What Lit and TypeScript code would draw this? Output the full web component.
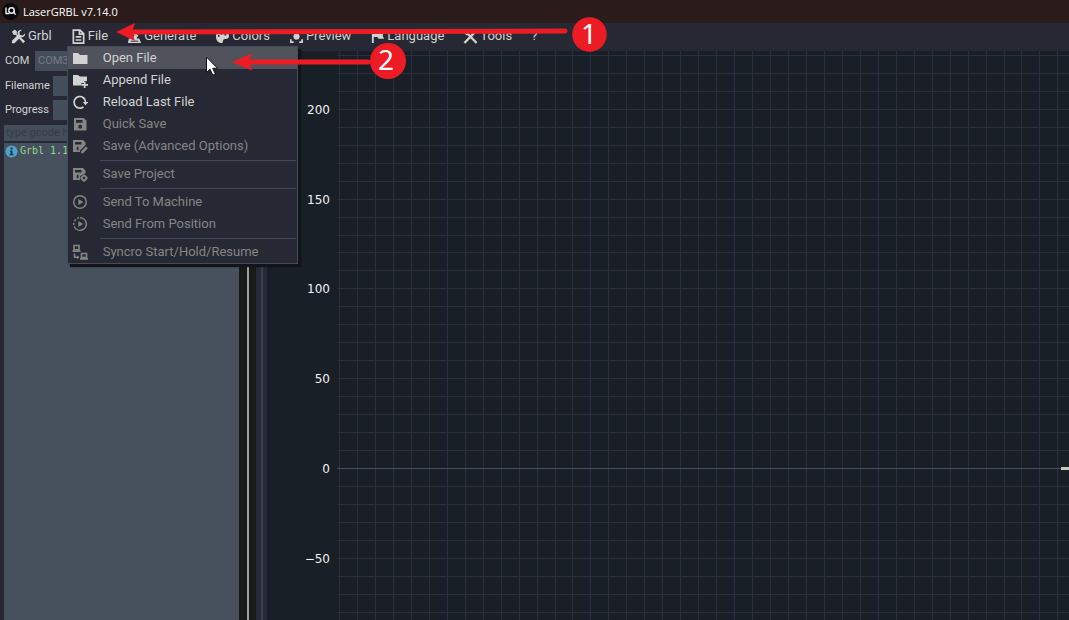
import { LitElement, html, svg, css, nothing, TemplateResult, SVGTemplateResult } from "lit";
import { customElement, state } from "lit/decorators.js";

const icons: Record<string, SVGTemplateResult> = {
  grbl: svg`<path d="M1 3 4 .5 6.500 3 6 5l9 8-2 2.200L5 6.200 3 6.500z"/><path d="M15 4.500 12.800 7 9.500 6.500 9 3.200 11.500 1C9.500.5 7 2 7 4.500L7.500 6 1 12.500v2.700h2.800L10 8.800C12.500 9.500 15.500 7.500 15 4.500z"/>`,
  file: svg`<path fill="none" stroke="currentColor" stroke-width="1.800" d="M2.500 1.200h7L13.500 5v10h-11zM9 1.500V5.500h4"/><path d="M5 7.500h6v1.700H5zM5 10.800h6v1.700H5z"/>`,
  generate: svg`<path d="M2 10h3l3-3-3-3 2-2 5 5-2 3h3l2 5H1z"/><path fill="#262933" d="M4 12.500h8v1H4z"/>`,
  colors: svg`<path fill-rule="evenodd" d="M8 1C4 1 1 4 1 8s2.500 7 6 7c2 0 1-2.500 2-3.500 1.200-1.500 6 0 6-4 0-4-3-6.500-7-6.500zM4 6.500a1 1 0 1 1 0 2 1 1 0 0 1 0-2zM7 4a1 1 0 1 1 0 2 1 1 0 0 1 0-2zM11 5a1 1 0 1 1 0 2 1 1 0 0 1 0-2z"/>`,
  preview: svg`<path fill="none" stroke="currentColor" stroke-width="1.800" d="M2 5V2h3M11 2h3v3M14 11v3h-3M5 14H2v-3"/><circle cx="8" cy="8" r="3.300"/>`,
  language: svg`<path d="M2 2h8l1 1.500h4L13.500 7l1.500 3.500H9L8 8.500H4V15H2z"/>`,
  tools: svg`<path fill="none" stroke="currentColor" stroke-width="2.400" d="M1.500 15 14 2M4 4l10.500 11"/><path d="M1 1h4l2 3-3 3-3-3z"/>`,
  open: svg`<path d="M1 3h5l2 2h7.500v9H1z"/>`,
  append: svg`<path d="M1 3h5l2 1.500h7V9h-3v2H9.500v2.500H1z"/><path d="M11.800 9.500h1.700V12H16v1.700h-2.500V16h-1.700v-2.300H9.500V12h2.300z"/>`,
  reload: svg`<path fill="none" stroke="currentColor" stroke-width="1.700" d="M11.500 12.800A5.800 5.800 0 1 1 13.600 8.300"/><path d="M10.800 8H16.200l-2.700 3.300z"/>`,
  save: svg`<path fill-rule="evenodd" d="M2 2h9.500L14.500 4.500V14.500H2zM4 4v2.700h6.500V4zM8.200 8.800a2 2 0 1 0 0 4 2 2 0 0 0 0-4z"/>`,
  saveAs: svg`<path fill-rule="evenodd" d="M1 2h10l2.500 2.500V7L8 12.500V14H1zM3 4v2.500h6.500V4zM6.500 8.500a2 2 0 1 0 0 4z"/><path d="m9 13.500 5-5L15.800 10.300 11 15.200H9z"/>`,
  project: svg`<path fill-rule="evenodd" d="M1 2h10l2.500 2.500V7L8 10v4H1zM3 4v2.500h6.500V4zM6.500 8.500a2 2 0 1 0 0 4z"/><circle cx="12" cy="12" r="2.200" fill="none" stroke="currentColor" stroke-width="1.800"/><path d="M11.200 8.300h1.600v1.500h-1.600zM11.200 14.200h1.600v1.500h-1.600zM8.300 11.200h1.500v1.600H8.300zM14.200 11.200h1.500v1.600h-1.500z"/>`,
  send: svg`<circle cx="8" cy="8" r="6.300" fill="none" stroke="currentColor" stroke-width="1.500"/><path d="m6.300 5 5 3-5 3z"/>`,
  sendFrom: svg`<path fill="none" stroke="currentColor" stroke-width="1.500" d="M8 1.700a6.300 6.300 0 1 1-5.800 8.800"/><path fill="none" stroke="currentColor" stroke-width="1.500" stroke-dasharray="2 1.800" d="M1.800 8.800A6.300 6.300 0 0 1 7 1.800"/><path d="m6.300 5 5 3-5 3z"/>`,
  syncro: svg`<path fill="none" stroke="currentColor" stroke-width="1.600" d="M2 1.500h5v4.200H2zM9.500 9.500h5v4h-5zM2.500 9.500v3.800h3.500"/><path d="M.5 6.300h8V8h-8zM8 14h8v1.700H8zM5 11.300l2.500 2-2.500 2z"/>`,
};

const icon = (name: string): TemplateResult =>
  html`<svg class="icon" viewBox="0 0 16 16" fill="currentColor" aria-hidden="true">${icons[name]}</svg>`;

interface MenuEntry { icon: string; label: string; disabled?: boolean; divider?: boolean; }

const FILE_MENU: MenuEntry[] = [
  { icon: "open", label: "Open File" },
  { icon: "append", label: "Append File" },
  { icon: "reload", label: "Reload Last File" },
  { icon: "save", label: "Quick Save", disabled: true },
  { icon: "saveAs", label: "Save (Advanced Options)", disabled: true },
  { icon: "project", label: "Save Project", disabled: true, divider: true },
  { icon: "send", label: "Send To Machine", disabled: true, divider: true },
  { icon: "sendFrom", label: "Send From Position", disabled: true },
  { icon: "syncro", label: "Syncro Start/Hold/Resume", disabled: true, divider: true },
];

const MENU_BAR = ["Grbl", "File", "Generate", "Colors", "Preview", "Language", "Tools"];

@customElement("laser-plot")
export class LaserPlot extends LitElement {
  static styles = css`
    :host { display: block; min-width: 0; background: #191f26; overflow: hidden; }
    .plot { display: block; width: 100%; height: 100%; }
    .line { stroke: #2a2e40; stroke-width: 1; shape-rendering: crispEdges; }
    .zero { stroke: #484c66; }
    .tick { fill: #f2f2f2; font: 12px "DejaVu Sans", sans-serif; text-anchor: end; }
  `;

  render() {
    const pitch = 17.96;
    const zeroY = 417;
    const columns = Array.from({ length: 160 }, (_, i) => Math.round(72 + i * pitch) + 0.5);
    const rows = Array.from({ length: 90 }, (_, i) => 23 - i).filter((n) => n !== 0);
    const y = (n: number) => Math.round(zeroY - n * pitch) + 0.5;
    return html`<svg class="plot" role="img" aria-label="Preview grid">
      ${columns.map((x) => svg`<line class="line" x1=${x} x2=${x} y1="0" y2="100%"></line>`)}
      ${rows.map((n) => svg`<line class="line" x1="70" x2="100%" y1=${y(n)} y2=${y(n)}></line>`)}
      <line class="line zero" x1="70" x2="100%" y1=${y(0)} y2=${y(0)}></line>
      <rect x="794" y="416" width="100%" height="3" fill="#c3cbbc"></rect>
      ${[200, 150, 100, 50, 0, -50].map(
        (v) => svg`<text class="tick" x="63" y=${Math.ceil(y(v / 10) + 4)}>${v < 0 ? `\u2212${-v}` : v}</text>`,
      )}
    </svg>`;
  }
}

@customElement("app-root")
export class AppRoot extends LitElement {
  @state() private menuOpen = true;

  static styles = css`
    :host {
      display: flex; flex-direction: column; position: relative; height: 100vh; overflow: hidden;
      background: #262933; color: #d2d2d2; font: 13px/18px Roboto, sans-serif;
    }
    * { box-sizing: border-box; }
    button, input, select { font: inherit; color: inherit; border: 0; border-radius: 0; margin: 0; padding: 0; background: none; }
    .titlebar { display: flex; align-items: center; gap: 4px; flex: none; height: 23px; padding-left: 2px; background: #2b1b1a; }
    .logo { width: 17px; height: 17px; }
    .title { margin: 0; font: 11px/16px "Open Sans", sans-serif; color: #fff; }
    .menubar { display: flex; flex: none; gap: 19px; height: 28px; padding: 4px 0 6px 11px; }
    .anchor { position: relative; display: flex; }
    .top { display: flex; align-items: center; gap: 2px; white-space: nowrap; }
    .top .icon { width: 15px; height: 15px; }
    .icon { flex: none; width: 16px; height: 16px; }
    .menu {
      position: absolute; z-index: 2; top: 19px; left: -4px; width: 231px;
      background: #262933; border: 1px solid #484a5a; box-shadow: 3px 3px 1px #11151a;
    }
    .item { display: flex; align-items: center; gap: 15px; width: 100%; height: 22px; padding-left: 4px; text-align: left; white-space: nowrap; }
    .item:disabled { color: #858585; }
    .item.active { background: #50535c; }
    .rule { height: 1px; margin: 3px 1px 2px 32px; border: 0; background: #43475a; }
    .body { display: grid; grid-template-columns: 239px 17px 11px minmax(0, 1fr); flex: 1; min-height: 0; }
    .panel { display: flex; flex-direction: column; min-width: 0; padding-left: 4px; font: 11px/16px Roboto, sans-serif; }
    .row { display: grid; grid-template-columns: 48px minmax(0, 1fr); align-items: center; height: 24px; padding-left: 1px; }
    .com { grid-template-columns: 30px minmax(0, 1fr); height: 20px; margin-bottom: 3px; }
    .field { width: 100%; min-width: 0; height: 20px; padding: 0 3px; background: #444e5a; color: #777b80; appearance: none; opacity: 1; }
    .gcode { flex: none; width: 100%; height: 16px; margin: 3px 0 2px; padding: 0 2px; background: #444e5a; }
    .gcode::placeholder { color: #343b46; opacity: 1; }
    .log { flex: 1; margin: 0; padding: 0; list-style: none; background: #47515d; color: #93d68c; font: 10px/16px "DejaVu Sans Mono", monospace; }
    .entry { display: flex; align-items: center; gap: 2px; padding-left: 1px; }
    .info { width: 13px; height: 13px; }
    .gutter { background: linear-gradient(#a0a0a0, #a0a0a0) 8px 0 / 2px 100% no-repeat #181a19; }
    .splitter { background: linear-gradient(#3c3e50, #3c3e50) 5px 0 / 2px 100% no-repeat #262a37; }
    .notes { position: absolute; z-index: 3; left: 0; top: 0; width: 610px; height: 90px; pointer-events: none; }
    .digit { font: 28px "Noto Sans", sans-serif; fill: #fff; text-anchor: middle; }
  `;

  private renderMenu() {
    return html`<div class="menu" role="menu" aria-label="File">
      ${FILE_MENU.map((entry, index) => html`
        ${entry.divider ? html`<hr class="rule" />` : nothing}
        <button class="item ${index === 0 ? "active" : ""}" role="menuitem" ?disabled=${entry.disabled}>
          ${icon(entry.icon)}<span>${entry.label}</span>
        </button>`)}
    </div>`;
  }

  render() {
    return html`
      <header class="titlebar">
        <svg class="logo" viewBox="0 0 17 17" aria-hidden="true">
          <circle cx="8.500" cy="8.500" r="8.500" fill="#090b0d" />
          <g fill="none" stroke="#eee" stroke-width="1.400">
            <path d="M4 4.500v6h3.500M13.800 11.500l-1.500-1V7.500" /><circle cx="9.500" cy="7.500" r="2.700" />
          </g>
        </svg>
        <h1 class="title">LaserGRBL v7.14.0</h1>
      </header>
      <nav class="menubar">
        ${MENU_BAR.map((name) => html`<div class="anchor">
          <button class="top" @click=${() => { if (name === "File") this.menuOpen = !this.menuOpen; }}>
            ${icon(name.toLowerCase())}<span>${name}</span>
          </button>
          ${name === "File" && this.menuOpen ? this.renderMenu() : nothing}
        </div>`)}
        <button class="top" aria-label="Help">?</button>
      </nav>
      <main class="body">
        <section class="panel">
          <div class="row com"><label for="com">COM</label>
            <select class="field" id="com" disabled><option>COM3</option></select></div>
          <div class="row"><label for="filename">Filename</label><input class="field" id="filename" readonly /></div>
          <div class="row"><label for="progress">Progress</label><input class="field" id="progress" readonly /></div>
          <input class="gcode" aria-label="G-code" placeholder="type gcode here" />
          <ul class="log"><li class="entry">
            <svg class="info" viewBox="0 0 13 13" aria-hidden="true"><circle cx="6.500" cy="6.500" r="6" fill="#4da3cf"/><path fill="#223845" d="M5.500 2.500h2v2h-2zM5 5.500h2.500v3.500h1v1.200H4.500V9h1V6.700H5z"/></svg>
            <span>Grbl 1.1</span>
          </li></ul>
        </section>
        <div class="gutter"></div>
        <div class="splitter"></div>
        <laser-plot></laser-plot>
      </main>
      <svg class="notes" viewBox="0 0 610 90" aria-hidden="true">
        <g fill="#ed1c24" stroke="none">
          <path d="M116 32 135 23 132 32 135 41z"/><path d="M232 62 252 53.500 249 62 252 70.500z"/>
          <circle cx="589.500" cy="34.500" r="17.300"/><circle cx="388" cy="61" r="18"/>
        </g>
        <g stroke="#ed1c24" stroke-width="5" stroke-linecap="round"><path d="M130 32 565 31"/><path d="M247 62H368"/></g>
        <text class="digit" x="589" y="44">1</text><text class="digit" x="386" y="70">2</text>
        <path d="M206.500 57v15.500l3.500-3.300 2.800 6 2.600-1.200-2.700-5.700h4.800z" fill="#fff" stroke="#111" stroke-width="1"/>
      </svg>`;
  }
}
